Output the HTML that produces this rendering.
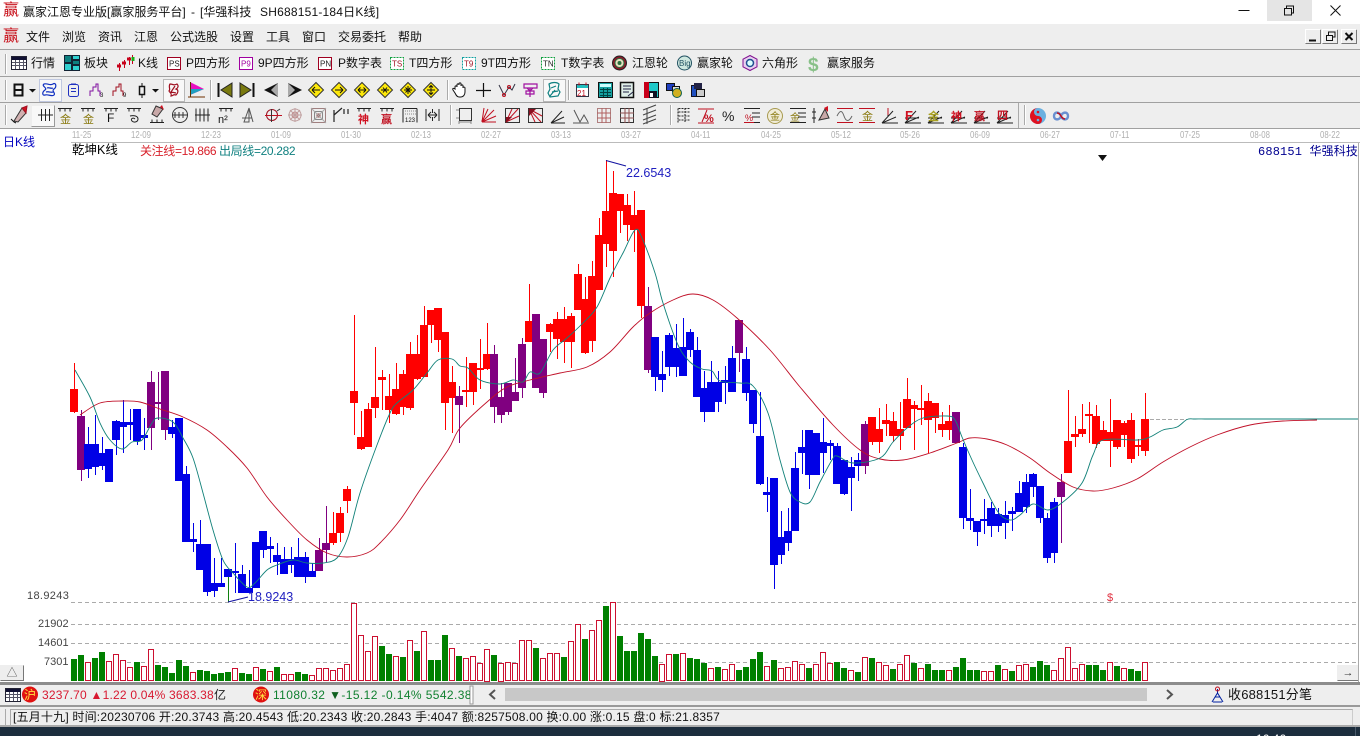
<!DOCTYPE html>
<html lang="zh-CN"><head><meta charset="utf-8"><title>赢家江恩专业版</title>
<style>
html,body{margin:0;padding:0;width:1360px;height:736px;overflow:hidden;background:#fff}
body{position:relative;font-family:"Liberation Sans","Noto Sans CJK SC",sans-serif;font-size:12px;color:#111}
.b{position:absolute;left:0;width:1360px}
.l{position:absolute;background:#a0a0a0}
.t{position:absolute;white-space:pre;line-height:16px;height:16px}
.d{position:absolute;top:130px;font-size:10px;color:#b0b0b0;line-height:12px;transform:scaleX(.78);transform-origin:0 0}
.m{position:absolute;font-family:"Liberation Sans",sans-serif;font-size:11px;color:#444;line-height:12px}
svg{position:absolute;left:0;top:0}
svg text{font-family:"Liberation Sans","Noto Sans CJK SC",sans-serif}
</style></head><body>
<div class="b" style="top:24px;height:104px;background:#eee"></div>
<div class="l" style="left:0;top:49px;width:1360px;height:1px"></div>
<div class="l" style="left:0;top:76px;width:1360px;height:1px"></div>
<div class="l" style="left:0;top:102px;width:1360px;height:1px"></div>
<div class="l" style="left:0;top:128px;width:1360px;height:1px"></div>
<div class="l" style="left:71px;top:142px;width:1289px;height:1px;background:#bbb"></div>
<div class="b" style="top:0;height:24px;background:#fff"></div>
<div style="position:absolute;left:1267px;top:0;width:45px;height:21px;background:#e5e5e5"></div>

<div class="t" style="left:23px;top:4px">赢家江恩专业版[赢家服务平台]</div>
<div class="t" style="left:191px;top:4px">-</div>
<div class="t" style="left:200px;top:4px">[华强科技</div>
<div class="t" style="left:260px;top:4px;letter-spacing:.2px">SH688151-184日K线]</div>
<div class="t" style="left:3px;top:3px;color:#c8101a;font-size:16px">赢</div>
<div class="t" style="left:3px;top:29px;color:#c8101a;font-size:16px">赢</div>
<div class="t" style="left:26px;top:29px">文件</div><div class="t" style="left:62px;top:29px">浏览</div><div class="t" style="left:98px;top:29px">资讯</div><div class="t" style="left:134px;top:29px">江恩</div><div class="t" style="left:170px;top:29px">公式选股</div><div class="t" style="left:230px;top:29px">设置</div><div class="t" style="left:266px;top:29px">工具</div><div class="t" style="left:302px;top:29px">窗口</div><div class="t" style="left:338px;top:29px">交易委托</div><div class="t" style="left:398px;top:29px">帮助</div>

<div class="t" style="left:31px;top:55px">行情</div><div class="t" style="left:84px;top:55px">板块</div><div class="t" style="left:138px;top:55px">K线</div><div class="t" style="left:186px;top:55px">P四方形</div><div class="t" style="left:258px;top:55px">9P四方形</div><div class="t" style="left:338px;top:55px">P数字表</div><div class="t" style="left:409px;top:55px">T四方形</div><div class="t" style="left:481px;top:55px">9T四方形</div><div class="t" style="left:561px;top:55px">T数字表</div><div class="t" style="left:632px;top:55px">江恩轮</div><div class="t" style="left:697px;top:55px">赢家轮</div><div class="t" style="left:762px;top:55px">六角形</div><div class="t" style="left:827px;top:55px">赢家服务</div>

<div style="position:absolute;left:39px;top:79px;width:21px;height:21px;background:#f8f8f8;border:1px solid #c0c8e0;box-sizing:content-box"></div>
<div style="position:absolute;left:163px;top:79px;width:20px;height:21px;background:#f8f8f8;border:1px solid #b8b8b8"></div>
<div style="position:absolute;left:543px;top:79px;width:21px;height:21px;background:#f8f8f8;border:1px solid #b8b8b8"></div>
<div style="position:absolute;left:31px;top:105px;width:22px;height:20px;background:#f8f8f8;border:1px solid;border-color:#eee #999 #999 #eee"></div>

<div class="d" style="left:72px">11-25</div><div class="d" style="left:131px">12-09</div><div class="d" style="left:201px">12-23</div><div class="d" style="left:271px">01-09</div><div class="d" style="left:341px">01-30</div><div class="d" style="left:411px">02-13</div><div class="d" style="left:481px">02-27</div><div class="d" style="left:551px">03-13</div><div class="d" style="left:621px">03-27</div><div class="d" style="left:691px">04-11</div><div class="d" style="left:761px">04-25</div><div class="d" style="left:831px">05-12</div><div class="d" style="left:900px">05-26</div><div class="d" style="left:970px">06-09</div><div class="d" style="left:1040px">06-27</div><div class="d" style="left:1110px">07-11</div><div class="d" style="left:1180px">07-25</div><div class="d" style="left:1250px">08-08</div><div class="d" style="left:1320px">08-22</div>

<svg id="c" width="1360" height="736" viewBox="0 0 1360 736" xmlns="http://www.w3.org/2000/svg"></svg>

<svg width="1360" height="736" viewBox="0 0 1360 736" xmlns="http://www.w3.org/2000/svg" fill="none" stroke-width="1">
<!-- window controls -->
<path d="M1238.500 10.500h11" stroke="#111"/>
<path d="M1284.500 8.500h7v6.500h-7zM1286.500 8.500v-2.500h7v7h-2" stroke="#111"/>
<path d="M1330.500 5.500l10 10M1340.500 5.500l-10 10" stroke="#111"/>
<!-- toolbar1 icons -->
<path d="M5.500 54v20" stroke="#aaa"/><path d="M6.500 54v20" stroke="#fff"/>
<rect x="11.500" y="56.500" width="15" height="13" fill="#fff" stroke="#223"/><rect x="12" y="57" width="14" height="3" fill="#113"/><path d="M12 62.500h14M12 65.500h14M15.500 60v9M19.500 60v9M23.500 60v9" stroke="#556"/>
<g fill="#14a0a0" stroke="#123"><rect x="64.500" y="55.500" width="7" height="7" fill="#0c7f7f"/><rect x="72.500" y="55.500" width="7" height="4" fill="#30d0d0"/><rect x="72.500" y="60.500" width="7" height="4" fill="#0c7f7f"/><rect x="64.500" y="63.500" width="7" height="7" fill="#30d0d0"/><rect x="72.500" y="65.500" width="7" height="5" fill="#30d0d0"/></g>
<g stroke="#c8001a"><path d="M119.500 63v8M124.500 60v8M129.500 57v8" /><path d="M117 66h4M122 63h4M127 59h4" stroke-width="3"/></g><path d="M132.500 55v9" stroke="#c8001a"/><path d="M131.500 57h3v4h-3z" fill="#18b018" stroke="none"/>
<g font-size="8" stroke="none" fill="#222">
<rect x="167.500" y="57.500" width="13" height="12" fill="#fff" stroke="#a00020"/><text x="169" y="66.500" fill="#222">PS</text>
<rect x="239.500" y="57.500" width="13" height="12" fill="#fff" stroke="#a000a0"/><text x="241" y="66.500" fill="#a000a0">P9</text>
<rect x="318.500" y="57.500" width="13" height="12" fill="#fff" stroke="#a00020"/><text x="320" y="66.500" fill="#222">PN</text>
<rect x="390.500" y="57.500" width="13" height="12" fill="#fff" stroke="#10a040" stroke-dasharray="2 1"/><text x="392" y="66.500" fill="#a01020">TS</text>
<rect x="462.500" y="57.500" width="13" height="12" fill="#fff" stroke="#10a0a0" stroke-dasharray="2 1"/><text x="464" y="66.500" fill="#a01020">T9</text>
<rect x="541.500" y="57.500" width="13" height="12" fill="#fff" stroke="#10a040" stroke-dasharray="2 1"/><text x="543" y="66.500" fill="#222">TN</text>
</g>
<circle cx="619.500" cy="63" r="7" fill="#8a1a2a" stroke="#222"/><circle cx="619.500" cy="63" r="4.500" fill="#e8e0c0" stroke="#2a7040"/><circle cx="619.500" cy="63" r="2" fill="#2a7040"/>
<circle cx="684.500" cy="63" r="7" fill="#cfe8e0" stroke="#205060"/><text x="679" y="66" font-size="8" fill="#205060">Big</text>
<path d="M750 55.500l7 3.700v7.600l-7 3.700-7-3.700v-7.600z" fill="#e8d0f0" stroke="#801090"/><circle cx="750" cy="63" r="3.500" fill="#dff" stroke="#205090" stroke-width="1.500"/>
<text x="808" y="71" font-size="19" font-weight="bold" fill="#88c088" stroke="none">$</text>
<!-- menu mdi -->
<path d="M1305.500 43.500h15v-14M1322.500 43.500h15v-14M1341.500 43.500h15v-14" stroke="#777"/><path d="M1305.500 43v-13.500h15M1322.500 43v-13.500h15M1341.500 43v-13.500h15" stroke="#fff"/>
<path d="M1309 40.500h7" stroke="#111" stroke-width="2"/><path d="M1326.500 35.500h6v5h-6zM1328.500 35v-3h6.500v5h-2" stroke="#111"/><path d="M1345.500 33l7 7M1352.500 33l-7 7" stroke="#111" stroke-width="2"/>
<!-- toolbar2 -->
<path d="M5.500 80v20M210.500 80v20M447.500 80v20M568.500 80v20" stroke="#aaa"/><path d="M6.500 80v20M211.500 80v20M448.500 80v20M569.500 80v20" stroke="#fff"/>
<path d="M14.500 84.500h8v11h-8zM14.500 90h8" stroke="#111" stroke-width="2"/><path d="M29 89h7l-3.500 3.500z" fill="#111"/>
<path d="M44 84c4-1 6 2 9 0s4 3 1 5 2 4 0 6-6-1-9 0-3-3 0-5-4-4-1-6zM47 88c2-1 4 1 6 0M46 92c3-1 5 1 7 0" stroke="#1030c0" stroke-width="1.200"/>
<rect x="68.500" y="84.500" width="10" height="12" rx="2" stroke="#2030c0"/><path d="M71 84h5M71 88.500h5M71 91.500h5" stroke="#2030c0"/>
<path d="M90 96v-5h3v-4h3v-3h2v7h2v5" stroke="#8010a0"/><text x="100" y="97" font-size="6" fill="#111">3</text>
<path d="M113 96v-5h3v-4h3v-3h2v7h2v5" stroke="#a01020"/><text x="123" y="97" font-size="6" fill="#111">9</text>
<rect x="139.500" y="86.500" width="5" height="8" stroke="#111" stroke-width="1.500"/><path d="M142 83v3M142 95v3" stroke="#111"/><path d="M152 89h7l-3.500 3.500z" fill="#111"/>
<path d="M170 84c3 0 4 2 7 0 2 2 1 4-1 5 3 1 2 4 0 6-3-1-3 1-5 1 1-3-1-3-2-5 2-2-1-4 1-7zM175 86l-4 6 5 1" stroke="#a01020" stroke-width="1.200"/>
<path d="M190 82v13l14-6z" fill="#e810c0"/><path d="M190 89h14l-14 6z" fill="#20a0c0"/><path d="M188 97h17" stroke="#703000"/><path d="M190.500 82v15" stroke="#603000"/>
<path d="M218.500 83v14" stroke="#111" stroke-width="2"/><path d="M232 83v14l-11-7z" fill="#7a7a10" stroke="#222"/>
<path d="M240 83v14l11-7z" fill="#7a7a10" stroke="#222"/><path d="M253.500 83v14" stroke="#111" stroke-width="2"/>
<path d="M264 90l14-7v14z" fill="#111"/><path d="M278 83v14l-7-7z" fill="#aaa"/>
<path d="M302 90l-14-7v14z" fill="#111"/><path d="M288 83v14l7-7z" fill="#aaa"/>
<g fill="#fde80a" stroke="#333"><path d="M316 82.500l7.500 7.500-7.500 7.500-7.500-7.500z"/><path d="M339 82.500l7.500 7.500-7.500 7.500-7.500-7.500z"/><path d="M362 82.500l7.500 7.500-7.500 7.500-7.500-7.500z"/><path d="M385 82.500l7.500 7.500-7.500 7.500-7.500-7.500z"/><path d="M408 82.500l7.500 7.500-7.500 7.500-7.500-7.500z"/><path d="M431 82.500l7.500 7.500-7.500 7.500-7.500-7.500z"/></g>
<g stroke="#111"><path d="M312 90h8M312 90l3-3M312 90l3 3M335 90h8M343 90l-3-3M343 90l-3 3M358 90h8M358 90l2.500-2.500M358 90l2.500 2.500M366 90l-2.500-2.500M366 90l-2.500 2.500M381 90h8M383 87.500l2 2.500 2-2.500M383 92.500l2-2.500 2 2.500M404 90h8M408 86v8M405.500 87.500l5 5M410.500 87.500l-5 5M427 90h8M431 85.500v9M429 87.500l2-2 2 2M429 92.500l2 2 2-2"/></g>
<path d="M455 89v-2c0-1.500 2-1.500 2 0v-2c0-1.500 2-1.500 2 0v-1c0-1.500 2-1.500 2 0v2c0-1.500 2-1.500 2 0v2c0-1.500 2-1 2 0v4c0 3-2 5-4 5h-2c-2 0-3-2-4-4l-2-3c-1-2 1-2 2-1z" stroke="#111" fill="#fff"/>
<path d="M483.500 83v14M476 90.500h15" stroke="#111" stroke-width="1.200"/>
<path d="M499 85l5 10 5-8 3 3 3-6" stroke="#334"/><circle cx="504" cy="95" r="1.500" stroke="#c01020"/><circle cx="509" cy="87" r="1.500" stroke="#c01020"/>
<path d="M524 84h13v4h-13zM527 88l3 3 3-3M530 88v9M526 91h8v3h-8z" stroke="#a010a0" stroke-width="1.200"/>
<path d="M549 84c3-2 8-2 10 0l-1 5 2 3-2 4-8 1-2-4 2-4-1-5zM551 88l5-2M552 92l6-1M550 96l5-6" stroke="#108080" stroke-width="1.200"/>
<rect x="576.500" y="84.500" width="12" height="12" fill="#fff" stroke="#334"/><rect x="577" y="85" width="11" height="3" fill="#20c0c0"/><text x="577" y="96" font-size="8" fill="#c01020">21</text><path d="M579 82.500v3M586 82.500v3" stroke="#c01020"/>
<rect x="598.500" y="82.500" width="14" height="15" fill="#13a0a0" stroke="#111"/><rect x="600" y="84" width="11" height="3" fill="#cff"/><path d="M600 89.500h11M600 92.500h11M600 95.500h11M603.500 88v9M607.500 88v9" stroke="#044"/>
<path d="M620.500 82.500h13v15h-13z" fill="#dfeee8" stroke="#111" stroke-width="1.500"/><path d="M623 86h8M623 89h8M623 92h6M628 96l5-4" stroke="#224"/>
<rect x="644.500" y="82.500" width="14" height="15" fill="#20c8c8" stroke="#111"/><rect x="644" y="82" width="5" height="16" fill="#c8001a"/><rect x="649" y="91" width="8" height="7" fill="#112"/><rect x="650" y="93" width="3" height="4" fill="#fff"/>
<rect x="666.500" y="83.500" width="8" height="7" fill="#2040c0" stroke="#111"/><rect x="672.500" y="86.500" width="7" height="5" fill="#ddd" stroke="#111"/><circle cx="677" cy="93" r="4.500" fill="#d0b020" stroke="#106050"/>
<rect x="691.500" y="85.500" width="6" height="11" fill="#2050c0" stroke="#112"/><rect x="694" y="83" width="8" height="6" fill="#224" /><rect x="696.500" y="89.500" width="8" height="7" fill="#ccc" stroke="#111"/>
<!-- toolbar3 -->
<path d="M5.500 105v20M450.500 105v20M670.500 105v20M1024.500 105v20" stroke="#aaa"/><path d="M6.500 105v20M451.500 105v20M671.500 105v20M1025.500 105v20" stroke="#fff"/>
<path d="M1018.500 103v25" stroke="#aaa"/>
<path d="M14 121l8-13 4 5-8 9z" fill="#d0b0b0" stroke="#333"/><path d="M22 108l4 5 1-7z" fill="#d01020" stroke="#a01020"/><path d="M11 119l3 3 2 1" stroke="#111"/>
<path d="M38 115h15M41.500 109v12M45.500 109v12M49.500 109v12" stroke="#222"/>
<g stroke="#222">
<path d="M58 108.500h14M60 108.500v3M65 108.500v3M70 108.500v3M81 108.500h14M83 108.500v3M88 108.500v3M93 108.500v3M104 108.500h14M106 108.500v3M111 108.500v3M116 108.500v3M127 108.500h14M129 108.500v3M134 108.500v3M139 108.500v3M150 122.500h14M152 119.500v3M157 119.500v3M162 119.500v3M196 108.500v13M200 108.500v13M204 108.500v13M208 108.500v13M195 115h15M219 108.500h14M221 108.500v3M226 108.500v3M231 108.500v3"/>
</g>
<g font-size="11" stroke="none"><text x="60" y="123" fill="#8a7a10">金</text><text x="83" y="123" fill="#8a7a10">金</text><text x="107" y="122" fill="#111" font-size="12">F</text><text x="218" y="123" fill="#111" font-size="11">n²</text></g>
<path d="M130 116c4-1 8 0 8 3s-4 4-6 2 1-4 3-2" stroke="#222"/>
<path d="M156 106l7 3-6 8-5-3z" fill="#c8a8a8" stroke="#333"/><path d="M160 107l4 3-2-5z" fill="#d01020"/>
<circle cx="180" cy="115" r="7.500" stroke="#333"/><path d="M172 115h16M175 112v6M179 112v6M183 112v6" stroke="#333"/>
<path d="M244 122l5-14v14zM249 122v-14l4 14M242 118h10" stroke="#555"/>
<circle cx="272" cy="115" r="5.500" stroke="#a01020"/><path d="M265 115.500h17" stroke="#c01020"/><path d="M271.500 109v13" stroke="#333"/><path d="M277 111l3-2" stroke="#333"/>
<circle cx="295" cy="115" r="6" stroke="#c0a0a0"/><circle cx="295" cy="115" r="3" stroke="#c08080"/><circle cx="295" cy="115" r="1.500" fill="#c01020"/><path d="M288 115h14M295 108v14M290 110l10 10M300 110l-10 10" stroke="#c0a0a0"/>
<rect x="311.500" y="108.500" width="14" height="14" stroke="#a08080"/><rect x="314.500" y="111.500" width="8" height="8" stroke="#888"/><rect x="316.500" y="113.500" width="4" height="4" fill="#a05050"/><path d="M311 108l15 15M326 108l-15 15" stroke="#aaa"/>
<path d="M334 122l0-12 0 5 8-7M344 109v5M348 109v5" stroke="#222" stroke-width="1.200"/>
<path d="M357 108.500h14M359 108.500v3M364 108.500v3M369 108.500v3M380 108.500h14M382 108.500v3M387 108.500v3M392 108.500v3" stroke="#222"/>
<g font-size="11" font-weight="bold" stroke="none"><text x="358" y="123" fill="#d01020">神</text><text x="381" y="123" fill="#c01020">赢</text></g>
<path d="M403 108.500h14M403 108.500v14M417 108.500v14" stroke="#222"/><path d="M403 111h14M403 114h14" stroke="#888" stroke-dasharray="1 1"/><text x="405" y="122" font-size="6" fill="#111">123</text>
<path d="M426 109v12M439 109v12M428 115h9M428 115l3-3M428 115l3 3M437 115l-3-3M437 115l-3 3M432.500 109v4M432.500 117v4" stroke="#222"/>
<rect x="459.500" y="108.500" width="12" height="12" stroke="#333"/><path d="M459 121v3M471 121v3M459 122h12M456 110h3M456 118h3" stroke="#888"/>
<path d="M482 122l12-12M482 122l14-6M482 122l6-13M482 122l14 0M482 122l2-14" stroke="#c01020"/><circle cx="483" cy="121" r="1.500" fill="#c01020"/>
<rect x="505.500" y="108.500" width="14" height="14" stroke="#333"/><path d="M506 122l12-13M506 122l13-6M506 122l6-13" stroke="#c01020"/><path d="M506 123v-6h6z" fill="#8a1020"/>
<rect x="528.500" y="108.500" width="14" height="14" stroke="#333"/><path d="M529 109l12 13M529 109l13 7M529 109l6 13" stroke="#c01020"/><path d="M529 109h7l-7 7z" fill="#8a1020"/>
<path d="M551 123h14M551 123l13-6M551 123l11-12" stroke="#222"/>
<path d="M573 123h16M574 110l6 12 4-7 4 7" stroke="#555"/>
<rect x="597.500" y="108.500" width="13" height="14" stroke="#b08080"/><path d="M602 108v15M606 108v15M597 113h14M597 118h14" stroke="#b06060"/>
<rect x="620.500" y="108.500" width="13" height="14" stroke="#333"/><path d="M625 108v15M629 108v15M620 113h14M620 118h14" stroke="#905050"/>
<path d="M643 110l13-5M643 115l13-5M643 120l13-5M643 124l13-5M647 108v16" stroke="#444"/>
<path d="M678 108.500v14M678.500 108.500h12M678.500 112h12M678.500 116h12M678.500 120h12M685 108v14" stroke="#222" stroke-dasharray="2 1"/>
<path d="M698 109h16M698 123h16M702 122l5-12" stroke="#c01020"/><text x="704" y="122" font-size="11" fill="#c01020" font-weight="bold">%</text>
<text x="722" y="121" font-size="14" fill="#222" stroke="none">%</text>
<path d="M744 108.500h16M744 122.500h16M752 113h8M752 117h8" stroke="#222"/><path d="M744 122.500h10" stroke="#c01020"/><text x="745" y="121" font-size="9" fill="#c01020">%</text>
<circle cx="775" cy="116" r="7.500" fill="#f0ecd8" stroke="#a89a50"/><text x="770" y="120" font-size="10" fill="#8a7a10">金</text>
<path d="M790 108.500h16M798 113h8M798 117h8M790 122.500h16" stroke="#222"/><text x="790" y="121" font-size="10" fill="#8a7a10">金</text>
<path d="M814 108v15M812 112h4M812 118h4" stroke="#222"/><path d="M819 120l6-11 4 9z" fill="#c8a8a8" stroke="#333"/><path d="M824 108l4 4 0-6z" fill="#d01020"/>
<path d="M837 108.500h16M837 122.500h16" stroke="#c01020"/><path d="M837 116c3-6 5-6 7 0s5 6 8 0" stroke="#666"/>
<path d="M859 108.500h16M859 122.500h16" stroke="#c01020"/><text x="862" y="120" font-size="11" fill="#8a7a10">金</text>
<path d="M882 123h16M882 123l14-6M882 123l11-12M888 108v8" stroke="#222"/><path d="M888 108v7" stroke="#c01020"/>
<g stroke="#222"><path d="M905 123h16M905 123l14-6M905 123l11-12M905 118h14M928 123h16M928 123l14-6M928 123l11-12M928 118h14M951 123h16M951 123l14-6M951 123l11-12M951 118h14M974 123h16M974 123l14-6M974 123l11-12M974 118h14M997 123h16M997 123l14-6M997 123l11-12M997 118h14"/></g>
<g font-size="11" font-weight="bold" stroke="none"><text x="905" y="120" fill="#d01020" font-size="13">F</text><text x="928" y="120" fill="#a8a020">金</text><text x="951" y="120" fill="#d01020">神</text><text x="974" y="120" fill="#c01020">赢</text><text x="997" y="119" fill="#c01020">四</text></g>
<circle cx="1038" cy="116" r="8" fill="#6ab0e0"/><path d="M1038 108a8 8 0 0 0 0 16 4 4 0 0 0 0-8 4 4 0 0 1 0-8z" fill="#e01020"/><circle cx="1038" cy="112" r="1.300" fill="#e01020"/><circle cx="1038" cy="120" r="1.300" fill="#6ab0e0"/>
<path d="M1054 116c0-5 6-4 7 0s7 5 7 0-6-4-7 0-7 5-7 0z" stroke="#6a90d0" stroke-width="2.400"/><path d="M1057 113c2 0 3 1 4 3s3 3 4 3" stroke="#c01020" stroke-width="1.500"/>
<!-- small arrows and marks -->
<path d="M1098 155h9l-4.500 6z" fill="#111"/>
</svg>

<div class="t" style="left:3px;top:134px;color:#0000c0">日K线</div>
<div class="t" style="left:72px;top:142px;color:#000;font-size:12.500px">乾坤K线</div>
<div class="t" style="left:140px;top:143px;color:#d8202a;letter-spacing:-.35px">关注线=19.866</div>
<div class="t" style="left:219px;top:143px;color:#108080;letter-spacing:-.35px">出局线=20.282</div>
<div class="t" style="left:1258px;top:144px;color:#000090;font-family:'Liberation Mono','Noto Sans CJK SC',monospace;font-size:12px;letter-spacing:.15px">688151 华强科技</div>
<div class="t" style="left:626px;top:165px;color:#2020c0;font-size:12.500px">22.6543</div>
<div class="t" style="left:248px;top:589px;color:#2020c0;font-size:12.500px">18.9243</div>
<div class="t" style="left:1107px;top:590px;color:#e03040;font-size:11px">$</div>
<div class="m" style="left:27px;top:590px;letter-spacing:.35px">18.9243</div>
<div class="m" style="left:38px;top:618px">21902</div>
<div class="m" style="left:38px;top:637px">14601</div>
<div class="m" style="left:44px;top:656px">7301</div>

<div style="position:absolute;left:0;top:665px;width:22px;height:14px;background:#eee;border:1px solid;border-color:#eee #777 #777 #eee;color:#555;text-align:center;line-height:14px;font-size:11px">△</div>
<div style="position:absolute;left:1337px;top:665px;width:20px;height:14px;background:#eee;border:1px solid;border-color:#eee #777 #777 #eee;color:#333;text-align:center;line-height:14px;font-size:11px">→</div>
<div class="l" style="left:1358px;top:143px;width:1px;height:540px;background:#aaa"></div>

<div class="b" style="top:682px;height:3px;background:#8c8c8c"></div>
<div class="b" style="top:685px;height:20px;background:#eee"></div>
<div class="b" style="top:705px;height:2px;background:#999"></div>
<div class="b" style="top:707px;height:20px;background:#eee"></div>
<div style="position:absolute;left:10px;top:709px;width:1341px;height:16px;border:1px solid #aaa;border-right-color:#ccc"></div>
<div class="l" style="left:5px;top:709px;width:1px;height:17px;background:#aaa"></div>
<div class="b" style="top:725px;height:2px;background:#aaa"></div>
<div class="b" style="top:727px;height:9px;background:#1c2d3d;overflow:hidden"><div style="position:absolute;left:1256px;top:5px;color:#fff;font-size:12px;line-height:14px">16:46</div><div style="position:absolute;left:1355px;top:0;width:1px;height:9px;background:#4a5a6a"></div></div>

<svg width="1360" height="736" viewBox="0 0 1360 736" xmlns="http://www.w3.org/2000/svg" fill="none">
<rect x="5.500" y="688.500" width="15" height="13" fill="#fff" stroke="#223"/><rect x="6" y="689" width="14" height="3" fill="#113"/><path d="M6 694.500h14M6 697.500h14M9.500 692v9M13.500 692v9M17.500 692v9" stroke="#556"/>
<circle cx="30" cy="694.500" r="8" fill="#e01010"/><circle cx="261" cy="694.500" r="8" fill="#e01010"/>
<text x="24" y="699" font-size="12" fill="#ffe040">沪</text><text x="255" y="699" font-size="12" fill="#ffe040">深</text>
<rect x="470" y="686" width="3" height="18" fill="#fff" stroke="#999"/>
<rect x="505" y="688" width="642" height="13" fill="#c8c8c8"/>
<path d="M495 690l-5 4.500 5 4.500" stroke="#555" stroke-width="2"/>
<path d="M1167 690l5 4.500-5 4.500" stroke="#555" stroke-width="2"/>
<path d="M1217.500 689v5M1212 702l5.500-9 5.500 9M1213 702h9M1215 697h5" stroke="#0020a0"/><circle cx="1217.500" cy="689" r="2" stroke="#c01020"/>
</svg>
<div style="position:absolute;left:42px;top:686px;height:18px;width:190px;white-space:pre;color:#d81830;font-size:12px;line-height:18px;letter-spacing:.22px">3237.70 ▲1.22 0.04% 3683.38<span style="color:#222">亿</span></div>
<div style="position:absolute;left:273px;top:686px;height:18px;width:197px;overflow:hidden;white-space:pre;color:#108030;font-size:12px;line-height:18px;letter-spacing:.4px">11080.32 <span style="color:#106020">▼</span>-15.12 -0.14% 5542.38亿</div>
<div class="t" style="left:1228px;top:686px;font-size:13px;line-height:18px;height:18px;letter-spacing:.2px">收688151分笔</div>
<div class="t" style="left:13px;top:709px;font-size:12px;letter-spacing:.2px;color:#111">[五月十九] 时间:20230706 开:20.3743 高:20.4543 低:20.2343 收:20.2843 手:4047 额:8257508.00 换:0.00 涨:0.15 盘:0 标:21.8357</div>

<script>
var D="r,363,413,389,412;p,410,481,416,470;b,427,478,444,469;b,415,475,444,467;b,437,470,453,466;b,449,482,449,482;b,420,455,421,440;b,400,453,422,427;b,409,440,422,425;b,409,445,409,441;b,418,450,435,438;p,371,450,382,428;p,372,420,402,404;p,371,440,371,430;b,420,438,427,434;b,418,481,418,481;b,466,542,474,542;b,523,552,539,542;b,520,570,544,570;b,544,596,544,592;b,558,597,583,591;b,558,587,583,587;b,569,590,569,577;b,543,593,571,573;b,565,593,574,593;b,570,593,588,593;b,542,588,542,588;b,531,558,531,550;b,537,563,546,549;b,543,575,555,562;b,547,574,559,574;b,547,573,559,565;b,538,577,557,577;b,552,583,557,577;b,563,577,571,577;p,538,571,550,571;p,506,562,543,550;r,512,545,533,543;r,507,542,513,533;r,486,513,489,501;r,315,435,391,403;r,411,450,437,449;r,403,447,409,447;r,347,418,397,408;r,370,410,377,380;r,374,423,396,410;r,363,415,389,414;r,370,415,374,407;r,342,410,354,408;r,335,380,354,379;r,306,377,325,377;r,310,343,310,325;r,308,352,308,340;r,332,430,332,403;r,366,433,382,398;p,386,443,396,405;r,357,407,390,391;r,363,405,363,392;r,339,389,368,370;r,323,370,354,369;p,345,423,354,407;p,383,423,397,415;p,383,415,383,412;p,358,401,392,401;p,338,398,344,388;r,284,342,321,342;p,314,388,314,388;p,339,398,339,393;r,323,352,324,332;r,312,359,319,339;r,307,363,319,342;r,313,368,316,342;r,264,310,274,310;r,277,354,299,353;r,261,352,276,341;r,218,290,235,290;r,160,267,211,244;r,171,277,193,251;r,194,233,194,211;r,194,241,205,225;r,191,252,215,230;r,210,318,210,306;p,287,373,306,370;b,337,391,337,377;b,351,392,374,380;b,333,376,335,367;b,324,377,348,367;b,318,376,347,376;b,329,357,332,350;b,337,397,350,397;b,371,422,388,412;b,361,412,382,412;b,371,412,382,402;b,366,404,380,383;b,346,392,358,392;p,320,372,320,353;b,347,401,359,393;b,390,433,390,424;b,392,485,436,484;b,477,512,492,495;b,478,589,478,565;b,511,564,537,555;b,508,551,531,543;b,452,531,468,531;b,430,474,447,453;b,430,489,430,475;b,433,475,433,475;b,418,473,442,453;b,440,460,443,446;b,443,484,446,484;b,460,495,460,494;b,457,511,467,478;b,453,481,460,466;p,421,474,424,466;r,417,445,417,442;r,408,453,429,442;r,404,436,420,424;r,412,442,421,436;r,402,450,429,436;r,378,428,399,428;r,401,450,405,409;r,385,425,408,409;r,393,453,401,420;r,403,433,403,418;r,412,437,424,430;r,405,440,421,430;p,412,443,412,443;b,443,529,447,518;b,489,530,518,521;b,521,546,521,532;b,499,534,519,520;b,502,537,508,526;b,508,532,514,526;b,501,539,515,523;b,507,531,511,514;b,481,512,493,512;b,474,513,482,507;b,473,497,474,487;b,486,523,486,518;b,513,563,518,558;b,498,563,502,553;p,474,543,482,497;r,390,473,441,473;r,416,447,434,437;r,404,437,429,434;r,402,443,414,416;r,405,448,416,444;r,421,441,430,441;r,399,467,432,441;r,420,449,420,447;r,421,447,423,435;r,413,463,420,459;r,439,456,445,446;r,393,456,419,451";
var V="g207 g195 r217 g204 g186 r214 r193 r211 r232 g216 r229 r178 g225 g231 g249 g210 g228 r247 g240 g243 g252 g249 g246 r235 g249 g252 r232 g237 r244 g231 r253 r253 g246 g252 r256 r235 r235 r241 r235 r223 r40 r136 r184 r139 g168 g192 r199 g201 r151 g183 r124 g210 g210 g135 r175 g198 r205 r199 r220 r176 g195 r219 r217 r220 r151 r151 g174 r205 r190 r190 g201 r154 r103 g147 r121 r91 g48 r37 g138 g183 g183 g129 g147 g198 r222 r193 g192 r190 g204 g207 g219 r235 g231 r238 r223 g240 g231 g207 g186 r229 g210 r235 r232 r214 r223 g234 r223 r187 r220 g216 g234 r241 g246 r202 g204 r217 r226 g237 r223 r196 g219 r235 g222 g240 g240 r241 g231 g204 g240 g240 r244 r244 g225 r238 g243 r226 r223 g231 g213 g225 r241 r205 r172 r235 r223 g225 g225 g240 r217 g228 r235 g237 g243 r217";
var GL="75,370 90,397 100,423 110,440 122,449 132,442 142,440 152,423 158,418 173,422 183,438 193,458 203,493 213,530 223,560 233,573 247,587 255,583 267,570 277,565 293,560 307,563 323,563 337,558 348,537 360,493 377,445 390,413 397,403 413,390 427,373 438,360 452,359 460,366 468,368 480,380 500,384 513,380 523,382 530,372 540,373 553,350 567,338 583,323 597,307 610,278 623,253 635,230 642,238 655,273 663,303 678,345 690,362 702,369 712,371 720,381 740,383 753,386 768,413 780,460 790,492 800,502 810,502 820,482 832,460 837,456 853,463 880,458 893,442 907,428 923,418 947,416 955,420 962,437 972,460 983,483 998,512 1010,520 1020,515 1033,504 1048,510 1063,502 1082,483 1093,455 1103,440 1137,440 1150,437 1163,430 1177,427 1187,419.500 1195,419 1205,419 1215,419";
var RL="80,415 100,403 123,401 140,402 160,409 183,417 207,430 227,447 247,468 267,497 287,520 307,540 327,553 347,557 367,553 380,543 400,520 420,490 448,450 460,428 487,402 507,387 530,380 560,373 587,367 610,352 633,327 650,313 673,300 693,294 713,300 737,318 770,350 800,387 833,425 860,450 880,459 903,460 930,453 957,443 970,438 987,439 1007,445 1030,458 1050,473 1073,487 1093,491 1113,488 1137,479 1163,462 1190,447 1217,435 1250,425 1283,421 1317,420";
function sm(str){var p=str.split(' ').map(function(q){return q.split(',').map(Number)}),o='M'+p[0][0]+' '+p[0][1];
 for(var i=0;i<p.length-1;i++){var a=p[Math.max(0,i-1)],b=p[i],c=p[i+1],e=p[Math.min(p.length-1,i+2)];
  o+='C'+(b[0]+(c[0]-a[0])/6).toFixed(1)+' '+(b[1]+(c[1]-a[1])/6).toFixed(1)+' '+(c[0]-(e[0]-b[0])/6).toFixed(1)+' '+(c[1]-(e[1]-b[1])/6).toFixed(1)+' '+c[0]+' '+c[1];}
 return o;}
var C={r:"#ff0000",b:"#0000e6",p:"#800080"},s='';
[602,624,643,662].forEach(function(y){s+='<path d="M71 '+(y+.5)+'H1358" stroke="#aaa" stroke-dasharray="4 3" fill="none"/>'});
s+='<path d="M1150 419.500H1187" stroke="#aaa" stroke-dasharray="4 2" fill="none"/>';
V.split(' ').forEach(function(v,i){var t=590+(+v.slice(1))/3,x=74+7*i;
 if(v[0]=='g')s+='<rect x="'+(x-3)+'" y="'+t.toFixed(0)+'" width="6" height="'+(681-t).toFixed(0)+'" fill="#008000"/>';
 else s+='<rect x="'+(x-2.5)+'" y="'+(t.toFixed(0)-.5+1)+'" width="5" height="'+(681-t-.5).toFixed(0)+'" fill="#fff" stroke="#cc1030"/>';
});
D.split(';').forEach(function(d,i){var a=d.split(','),x=74+7*i,f=C[a[0]];
 s+='<g shape-rendering="crispEdges" fill="'+f+'"><rect x="'+x+'" y="'+a[1]+'" width="1" height="'+(a[2]-a[1])+'"/><rect x="'+(x-4)+'" y="'+a[3]+'" width="8" height="'+Math.max(2,a[4]-a[3])+'"/></g>';
});
s+='<path d="M228.500 577V602" stroke="#108010" fill="none"/><path d="M228 602L248 597M606 160.500L626 166" stroke="#1010a0" fill="none"/>';
s+='<path d="'+sm(RL)+'" fill="none" stroke="#c01028" stroke-width=".9"/>';
s+='<path d="'+sm(GL)+'L1358 419" fill="none" stroke="#108078" stroke-width=".9"/>';
document.getElementById('c').innerHTML=s;
</script>
</body></html>
